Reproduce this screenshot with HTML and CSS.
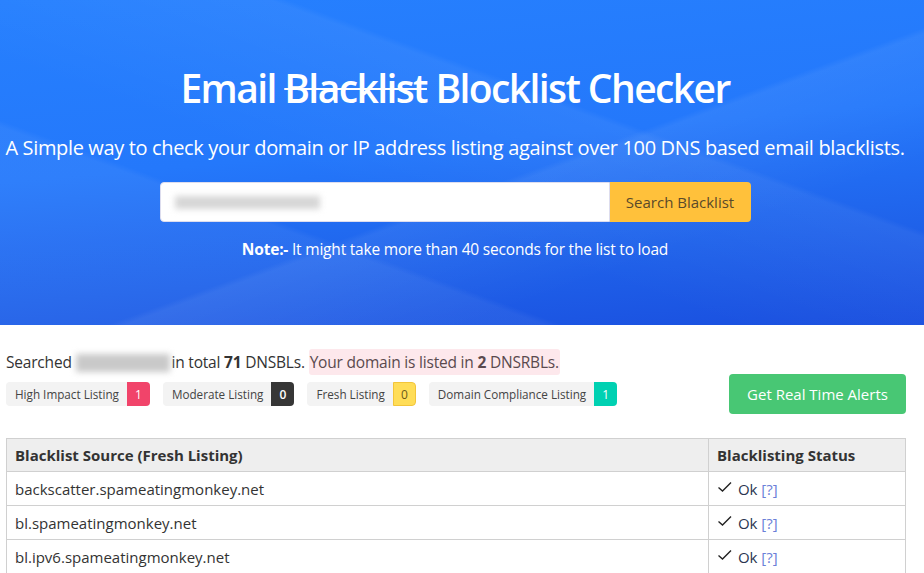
FILE: index.html
```html
<!DOCTYPE html>
<html lang="en">
<head>
    <meta charset="UTF-8">
    <meta name="viewport" content="width=device-width, initial-scale=1.0">
    <title>Email Blocklist Checker</title>
    <link rel="stylesheet" href="styles.css">
</head>
<body>
    <section class="hero">
        <h1><span>Email</span> <s>Blacklist</s> <span>Blocklist Checker</span></h1>
        <p class="lead">A Simple way to check your domain or IP address listing against over 100 DNS based email blacklists.</p>
        <form class="search">
            <div class="search-input"><span class="blur blur-input"></span></div>
            <button type="button" class="search-btn">Search Blacklist</button>
        </form>
        <p class="note"><b>Note:-</b> It might take more than 40 seconds for the list to load</p>
    </section>

    <main class="results">
        <p class="summary">Searched <span class="blur blur-domain"></span>in total <b>71</b> DNSBLs. <span class="listed">Your domain is listed in <b>2</b> DNSRBLs.</span></p>
        <div class="toolbar">
            <div class="badges">
                <span class="badge">High Impact Listing <i class="count red">1</i></span>
                <span class="badge">Moderate Listing <i class="count dark">0</i></span>
                <span class="badge">Fresh Listing <i class="count yellow">0</i></span>
                <span class="badge">Domain Compliance Listing <i class="count teal">1</i></span>
            </div>
            <button type="button" class="alerts-btn">Get Real Time Alerts</button>
        </div>

        <table class="list">
            <thead>
                <tr>
                    <th>Blacklist Source (Fresh Listing)</th>
                    <th>Blacklisting Status</th>
                </tr>
            </thead>
            <tbody>
                <tr>
                    <td>backscatter.spameatingmonkey.net</td>
                    <td class="status"><svg width="16" height="12" viewBox="0 0 16 12"><path d="M1.5 6.5 L5.5 10 L14 1.5" fill="none" stroke="#222" stroke-width="1.4"/></svg> Ok <a href="#">[?]</a></td>
                </tr>
                <tr>
                    <td>bl.spameatingmonkey.net</td>
                    <td class="status"><svg width="16" height="12" viewBox="0 0 16 12"><path d="M1.5 6.5 L5.5 10 L14 1.5" fill="none" stroke="#222" stroke-width="1.4"/></svg> Ok <a href="#">[?]</a></td>
                </tr>
                <tr>
                    <td>bl.ipv6.spameatingmonkey.net</td>
                    <td class="status"><svg width="16" height="12" viewBox="0 0 16 12"><path d="M1.5 6.5 L5.5 10 L14 1.5" fill="none" stroke="#222" stroke-width="1.4"/></svg> Ok <a href="#">[?]</a></td>
                </tr>
            </tbody>
        </table>
    </main>
</body>
</html>
```

FILE: styles.css
```css
body {
    margin: 0;
    font-family: "Open Sans", "Noto Sans", sans-serif;
    color: #333;
    background: #fff;
}
.hero {
    height: 325px;
    box-sizing: border-box;
    padding: 62px 14px 0 0;
    text-align: center;
    color: #fff;
    background:
        linear-gradient(160deg, rgba(255,255,255,0) 55%, rgba(255,255,255,0.06) 56%, rgba(255,255,255,0) 75%),
        linear-gradient(200deg, rgba(255,255,255,0) 35%, rgba(255,255,255,0.05) 36%, rgba(255,255,255,0) 60%),
        linear-gradient(20deg, rgba(255,255,255,0.05) 30%, rgba(255,255,255,0) 31%),
        linear-gradient(175deg, #2680fe 0%, #2478fb 45%, #1f62ea 75%, #1a4fdf 100%);
}
h1 {
    margin: 0;
    font-size: 39px;
    font-weight: 600;
    letter-spacing: -1.6px;
    line-height: 52px;
}
h1 s {
    text-decoration-thickness: 2px;
}
.lead {
    margin: 20px 0 0;
    font-size: 20px;
    letter-spacing: -0.35px;
}
.search {
    display: flex;
    width: 591px;
    height: 40px;
    margin: 21px auto 0;
}
.search-input {
    flex: 1;
    display: flex;
    align-items: center;
    padding-left: 14px;
    background: #fff;
    border-radius: 4px 0 0 4px;
    border: 1px solid #dde;
}
.blur {
    display: inline-block;
    background: #c9c9c9;
    filter: blur(3px);
}
.blur-input {
    width: 145px;
    height: 13px;
    background: #d6d6d6;
}
.search-btn {
    width: 141px;
    border: none;
    background: #ffc13b;
    color: #5a4a2a;
    font-family: inherit;
    font-size: 15px;
    border-radius: 0 4px 4px 0;
}
.note {
    margin: 16px 0 0;
    font-size: 15.5px;
    letter-spacing: -0.2px;
}
.results {
    padding: 0 18px 0 6px;
}
.summary {
    margin: 26px 0 0;
    font-size: 15.5px;
    line-height: 22px;
    letter-spacing: -0.2px;
}
.blur-domain {
    width: 94px;
    height: 18px;
    vertical-align: -4px;
    margin-right: 2px;
}
.listed {
    background: #fde8ec;
    color: #5a4a4e;
    padding: 2px 1px;
    border-radius: 3px;
}
.toolbar {
    display: flex;
    justify-content: space-between;
    align-items: flex-start;
    margin-top: 1px;
}
.badges {
    display: flex;
    gap: 13px;
    padding-top: 8px;
}
.badge {
    display: flex;
    align-items: center;
    height: 24px;
    padding-left: 9px;
    background: #f3f3f3;
    border-radius: 4px;
    font-size: 11.7px;
    color: #444;
    overflow: hidden;
}
.count {
    font-style: normal;
    display: flex;
    align-items: center;
    justify-content: center;
    width: 23px;
    height: 24px;
    margin-left: 8px;
    color: #fff;
    font-size: 12px;
}
.red { background: #f1446a; }
.dark { background: #363636; font-weight: 600; }
.yellow { background: #ffdd57; color: #6b5a1a; border: 1px solid #f3c53a; box-sizing: border-box; border-radius: 0 4px 4px 0; }
.teal { background: #00d1b2; }
.alerts-btn {
    width: 177px;
    height: 40px;
    border: none;
    border-radius: 4px;
    background: #48c774;
    color: #fff;
    font-family: inherit;
    font-size: 15px;
}
.list {
    width: 100%;
    margin-top: 24px;
    border-collapse: collapse;
    font-size: 15px;
}
.list th, .list td {
    border: 1px solid #d0d0d0;
    text-align: left;
    padding: 0 8px;
    height: 33px;
}
.list th {
    height: 32px;
    background: #eee;
    font-weight: 700;
    color: #333;
}
.list th:first-child {
    width: 685px;
}
.status {
    color: #2b3550;
}
.status svg {
    vertical-align: 2px;
    margin-right: 1px;
}
.status a {
    color: #6b7fd8;
    text-decoration: none;
}
```
